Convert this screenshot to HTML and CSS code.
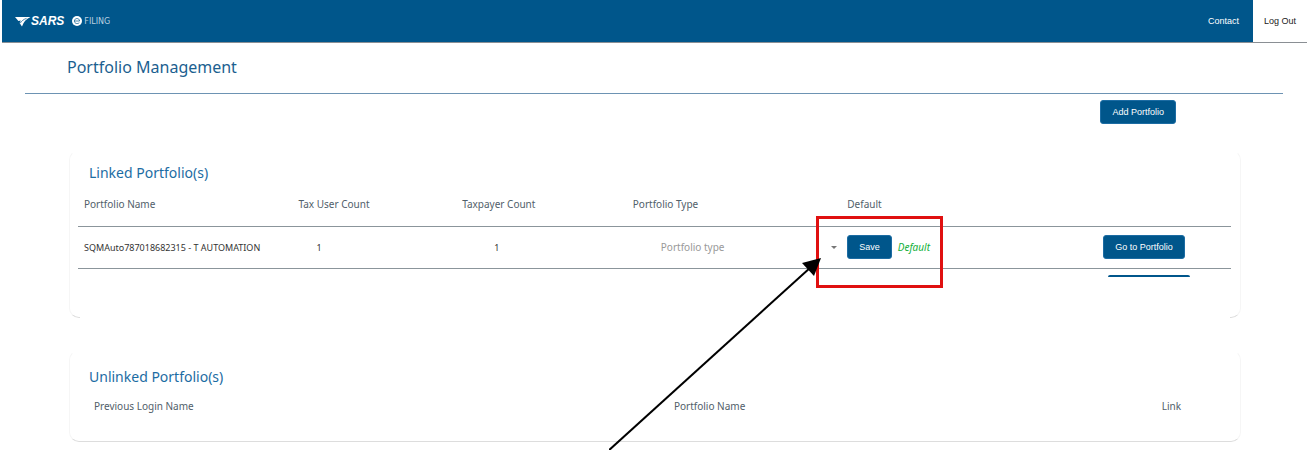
FILE: index.html
```html
<!DOCTYPE html>
<html lang="en">
<head>
    <meta charset="UTF-8">
    <meta name="viewport" content="width=device-width, initial-scale=1.0">
    <title>Portfolio Management</title>
    <link rel="stylesheet" href="styles.css">
</head>
<body>

    <header class="topbar">
        <a class="brand" href="#">
            <svg class="brand-mark" viewBox="0 0 16 11" aria-hidden="true">
                <path d="M0 1 H15.5 C11 3 8.5 6 7 10.5 L4.6 7 L5.8 4.4 L3.4 5 Z" fill="#fff"/>
                <path d="M5.2 7.2 C6.5 5 8.5 3.4 11.5 2.4" fill="none" stroke="#00568b" stroke-width="0.7"/>
            </svg>
            <span class="brand-name">SARS</span>
            <svg class="brand-e" viewBox="0 0 10 10" aria-hidden="true">
                <circle cx="5" cy="5" r="5" fill="#fff"/>
                <path d="M2.4 5 H7.6 C7.6 1.7 2.4 1.7 2.4 5 C2.4 7.8 5.8 8.2 7.3 6.7" fill="none" stroke="#00568b" stroke-width="0.7"/>
            </svg>
            <span class="brand-sub">FILING</span>
        </a>
        <nav class="topnav">
            <a class="nav-link" href="#">Contact</a>
            <a class="nav-link nav-logout" href="#">Log Out</a>
        </nav>
    </header>

    <main class="page">
        <h1>Portfolio Management</h1>

        <div class="toolbar">
            <button type="button" class="btn">Add Portfolio</button>
        </div>

        <section class="card card-linked">
            <h2>Linked Portfolio(s)</h2>
            <table class="linked-table">
                <colgroup>
                    <col class="col-name">
                    <col class="col-users">
                    <col class="col-payers">
                    <col class="col-type">
                    <col class="col-default">
                    <col>
                </colgroup>
                <thead>
                    <tr>
                        <th>Portfolio Name</th>
                        <th>Tax User Count</th>
                        <th>Taxpayer Count</th>
                        <th>Portfolio Type</th>
                        <th>Default</th>
                        <th></th>
                    </tr>
                </thead>
                <tbody>
                    <tr>
                        <td>SQMAuto787018682315 - T AUTOMATION</td>
                        <td class="count">1</td>
                        <td class="count count-wide">1</td>
                        <td>
                            <div class="select-wrap">
                                <select aria-label="Portfolio type">
                                    <option>Portfolio type</option>
                                </select>
                            </div>
                        </td>
                        <td>
                            <div class="default-cell">
                                <button type="button" class="btn">Save</button>
                                <span class="default-label">Default</span>
                                <span class="highlight"></span>
                                <svg class="arrow" viewBox="0 0 212 192" aria-hidden="true">
                                    <path d="M-2 194 L202 9" stroke="#000" stroke-width="2"/>
                                    <path d="M212 0 L193 5 L205 18 Z" fill="#000"/>
                                </svg>
                            </div>
                        </td>
                        <td><button type="button" class="btn">Go to Portfolio</button></td>
                    </tr>
                </tbody>
            </table>
            <div class="next-row"></div>
        </section>

        <section class="card card-unlinked">
            <h2>Unlinked Portfolio(s)</h2>
            <table class="unlinked-table">
                <thead>
                    <tr>
                        <th class="col-previous">Previous Login Name</th>
                        <th class="col-portfolio">Portfolio Name</th>
                        <th>Link</th>
                    </tr>
                </thead>
            </table>
        </section>
    </main>

</body>
</html>
```
FILE: styles.css
```css
* {
    box-sizing: border-box;
}

body {
    min-height: 100vh;
    margin: 0;
    background-color: #fff;
    color: #333;
    font-family: "Noto Sans", "Open Sans", sans-serif;
    font-size: 10px;
}

/* Top bar */
.topbar {
    display: flex;
    justify-content: space-between;
    height: 43px;
    margin: 0 5px 0 2px;
    background-color: #00568b;
    border-bottom: 1px solid #8a8f94;
}

.brand {
    display: flex;
    align-items: center;
    padding-left: 13px;
    color: #fff;
    text-decoration: none;
}

.brand-mark {
    width: 16px;
    height: 11px;
}

.brand-name {
    font-family: "Liberation Sans", Arial, sans-serif;
    font-size: 12px;
    font-style: italic;
    font-weight: 700;
}

.brand-e {
    width: 10px;
    height: 10px;
    margin: 0 2px 0 8px;
}

.brand-sub {
    font-family: "DejaVu Sans", sans-serif;
    font-size: 8px;
    color: #b9d0e0;
}

.topnav {
    display: flex;
    font-family: "Liberation Sans", Arial, sans-serif;
    font-size: 9px;
}

.nav-link {
    display: flex;
    align-items: center;
    padding: 0 14px;
    color: #fff;
    text-decoration: none;
}

.nav-logout {
    padding: 0 11px;
    background-color: #fff;
    color: #222;
}

/* Page */
.page {
    padding: 0 29px 0 25px;
}

h1 {
    margin: 0;
    padding: 12px 42px 14px;
    border-bottom: 1px solid #6d93b3;
    color: #1c5f90;
    font-size: 16px;
    font-weight: 400;
    line-height: 24px;
}

.toolbar {
    display: flex;
    justify-content: flex-end;
    padding: 6px 107px 0 0;
}

.btn {
    height: 24px;
    padding: 0 11px;
    border: 1px solid #1c6ca3;
    border-radius: 3px;
    background-color: #00568b;
    color: #fff;
    font-family: "Liberation Sans", Arial, sans-serif;
    font-size: 9px;
    white-space: nowrap;
    cursor: pointer;
}

/* Cards */
.card {
    position: relative;
    margin: 0 42px 0 44px;
    padding: 0 9px 0 8px;
    border: 1px solid #f6f6f6;
    border-top-color: transparent;
    border-bottom-color: #ddd;
    border-radius: 10px;
}

.card h2 {
    margin: 0 11px;
    color: #1c6ca3;
    font-size: 14px;
    font-weight: 400;
    line-height: 20px;
}

.card-linked {
    margin-top: 26px;
    padding-top: 12px;
    padding-bottom: 40px;
}

/* only the rounded corners of this card keep their edge */
.card-linked::after {
    content: "";
    position: absolute;
    right: 10px;
    bottom: -1px;
    left: 10px;
    height: 1px;
    background-color: #fff;
}

.card-unlinked {
    margin-top: 32px;
    padding-top: 16px;
    padding-bottom: 16px;
}

table {
    width: 100%;
    border-collapse: collapse;
    table-layout: fixed;
}

th,
td {
    padding: 0 6px;
    text-align: left;
    white-space: nowrap;
}

th {
    color: #51606a;
    font-weight: 400;
}

td {
    font-size: 9px;
}

.linked-table th {
    height: 43px;
}

.linked-table tr {
    border-bottom: 1px solid #8b959b;
}

.linked-table td {
    height: 42px;
}

.col-name,
.col-type {
    width: 18.6%;
}

.col-users {
    width: 14.2%;
}

.col-payers {
    width: 14.8%;
}

.col-default {
    width: 22.2%;
}

.linked-table .count {
    padding-left: 24px;
}

.linked-table .count-wide {
    padding-left: 38px;
}

/* Portfolio type drop-down */
.select-wrap {
    position: relative;
    margin-left: 28px;
}

.select-wrap select {
    width: 100%;
    height: 24px;
    padding: 0;
    border: 0;
    appearance: none;
    background-color: transparent;
    color: #999;
    font-family: "Noto Sans", "Open Sans", sans-serif;
    font-size: 10px;
}

.select-wrap::after {
    content: "";
    position: absolute;
    top: 11px;
    right: -2px;
    border: 3px solid transparent;
    border-top-color: #777;
    border-bottom: 0;
}

.default-cell {
    position: relative;
    z-index: 1;
    display: flex;
    align-items: center;
    gap: 6px;
}

.default-label {
    color: #12b03a;
    font-size: 10px;
    font-style: italic;
}

/* Callout over the default column */
.highlight {
    position: absolute;
    top: -19px;
    left: -31px;
    width: 127px;
    height: 72px;
    border: 3px solid #e01010;
}

.arrow {
    position: absolute;
    top: 23px;
    left: -238px;
    width: 212px;
    height: 192px;
    pointer-events: none;
}

/* top edge of the next row's button, cut off by the list */
.next-row {
    width: 82px;
    height: 2px;
    margin: 6px 41px 0 auto;
    border-radius: 2px 2px 0 0;
    background-color: #00568b;
}

/* Unlinked portfolios */
.unlinked-table th {
    height: 38px;
    padding-left: 16px;
}

.col-previous {
    width: 50.3%;
}

.col-portfolio {
    width: 42.3%;
}
```
